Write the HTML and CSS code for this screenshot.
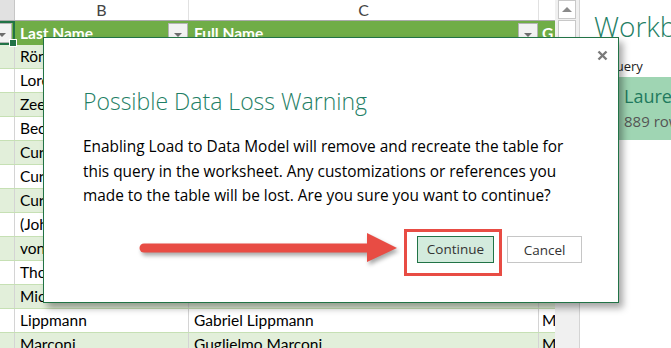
FILE: index.html
```html
<!DOCTYPE html>
<html lang="en">
<head>
  <meta charset="UTF-8" />
  <title>Possible Data Loss Warning</title>
  <link rel="stylesheet" href="styles.css">
</head>
<body>
  <div class="screen">
    <div class="sheet">
      <div class="col-heads">
        <div class="ch ch-a"></div>
        <div class="ch">B</div>
        <div class="ch">C</div>
        <div class="ch ch-d"></div>
      </div>

      <div class="row head">
        <div class="cell a selected"><span class="filter"></span></div>
        <div class="cell b">Last Name<span class="filter"></span></div>
        <div class="cell c">Full Name<span class="filter"></span></div>
        <div class="cell d">G</div>
      </div>
      <div class="row band"><div class="cell a"></div><div class="cell b">Röntgen</div><div class="cell c">Wilhelm Conrad Röntgen</div><div class="cell d">Male</div></div>
      <div class="row"><div class="cell a"></div><div class="cell b">Lorentz</div><div class="cell c">Hendrik Antoon Lorentz</div><div class="cell d">Male</div></div>
      <div class="row band"><div class="cell a"></div><div class="cell b">Zeeman</div><div class="cell c">Pieter Zeeman</div><div class="cell d">Male</div></div>
      <div class="row"><div class="cell a"></div><div class="cell b">Becquerel</div><div class="cell c">Antoine Henri Becquerel</div><div class="cell d">Male</div></div>
      <div class="row band"><div class="cell a"></div><div class="cell b">Curie</div><div class="cell c">Pierre Curie</div><div class="cell d">Male</div></div>
      <div class="row"><div class="cell a"></div><div class="cell b">Curie</div><div class="cell c">Marie Curie</div><div class="cell d">Female</div></div>
      <div class="row band"><div class="cell a"></div><div class="cell b">Curie</div><div class="cell c">Marie Curie</div><div class="cell d">Female</div></div>
      <div class="row"><div class="cell a"></div><div class="cell b">(John William Strutt)</div><div class="cell c">Lord Rayleigh</div><div class="cell d">Male</div></div>
      <div class="row band"><div class="cell a"></div><div class="cell b">von Lenard</div><div class="cell c">Philipp Eduard Anton von Lenard</div><div class="cell d">Male</div></div>
      <div class="row"><div class="cell a"></div><div class="cell b">Thomson</div><div class="cell c">Joseph John Thomson</div><div class="cell d">Male</div></div>
      <div class="row band"><div class="cell a"></div><div class="cell b">Michelson</div><div class="cell c">Albert Abraham Michelson</div><div class="cell d">Male</div></div>
      <div class="row"><div class="cell a"></div><div class="cell b">Lippmann</div><div class="cell c">Gabriel Lippmann</div><div class="cell d">Male</div></div>
      <div class="row band"><div class="cell a"></div><div class="cell b">Marconi</div><div class="cell c">Guglielmo Marconi</div><div class="cell d">Male</div></div>
    </div>

    <div class="scrollbar">
      <div class="sb-btn"><span class="sb-up"></span></div>
      <div class="sb-thumb"></div>
    </div>

    <div class="pane">
      <div class="pane-title">Workbook Queries</div>
      <div class="pane-count">1 query</div>
      <div class="query-card">
        <div class="query-name">Laureates</div>
        <div class="query-rows">889 rows loaded.</div>
      </div>
    </div>

    <div class="dialog">
      <div class="dialog-top">
        <svg class="close" width="11" height="11" viewBox="0 0 11 11">
          <path d="M1.5 1.5 L9.5 9.5 M9.5 1.5 L1.5 9.5" stroke="#7a7a7a" stroke-width="2.4" />
        </svg>
      </div>
      <h1 class="dialog-title">Possible Data Loss Warning</h1>
      <p class="dialog-text">Enabling Load to Data Model will remove and recreate the table for this query in the worksheet. Any customizations or references you made to the table will be lost. Are you sure you want to continue?</p>
      <div class="dialog-buttons">
        <svg class="arrow" width="262" height="36" viewBox="0 0 262 36">
          <path d="M5 18 L232 18" stroke="#e84c44" stroke-width="9" stroke-linecap="round" />
          <polygon points="228,3 258,18 228,32" fill="#e84c44" />
        </svg>
        <span class="highlight"><button class="btn btn-primary">Continue</button></span>
        <button class="btn">Cancel</button>
      </div>
    </div>
  </div>
</body>
</html>
```

FILE: styles.css
```css
* {
  margin: 0;
  padding: 0;
  box-sizing: border-box;
}

body {
  background: #fff;
  overflow: hidden;
  font-family: 'Lato', 'Liberation Sans', sans-serif;
}

.screen {
  position: relative;
  display: flex;
  width: 671px;
  height: 348px;
  overflow: hidden;
}

/* worksheet */

.sheet {
  width: 555px;
  flex-shrink: 0;
}

.col-heads,
.row {
  display: grid;
  grid-template-columns: 15px 174px 350px 16px;
}

.col-heads {
  height: 21px;
  border-bottom: 1px solid #ababab;
}

.ch {
  border-right: 1px solid #e1e1e1;
  text-align: center;
  font-size: 16px;
  line-height: 20px;
  color: #444;
}

.ch-a {
  background: #e1e1e1;
  border-right-color: #c6c6c6;
}

.ch-d {
  border-right: none;
}

.row {
  height: 24px;
  border-bottom: 1px solid #c6e0b4;
}

.row.band {
  background: #e2efda;
}

.cell {
  border-right: 1px solid #d4d4d4;
  padding-left: 5px;
  font-size: 15.5px;
  line-height: 23px;
  color: #000;
  white-space: nowrap;
  overflow: hidden;
}

.cell.a {
  padding-left: 0;
}

.cell.d {
  border-right: none;
  padding-left: 3px;
}

.row.head {
  background: #70ad47;
  border-bottom: none;
}

.head .cell {
  display: flex;
  justify-content: space-between;
  align-items: center;
  border-right-color: #70ad47;
  color: #fff;
  font-weight: bold;
}

.head .cell.a {
  justify-content: flex-end;
  padding-right: 1px;
}

.cell.selected {
  position: relative;
  overflow: visible;
  border: 2px solid #217346;
  border-left: none;
}

.cell.selected::after {
  content: "";
  position: absolute;
  right: -4px;
  bottom: -4px;
  width: 6px;
  height: 6px;
  background: #217346;
  border: 1px solid #fff;
}

.filter {
  position: relative;
  width: 20px;
  height: 20px;
  flex-shrink: 0;
  background: #f2f2f2;
  border: 1px solid #b4b4b4;
}

.filter::after {
  content: "";
  position: absolute;
  left: 5px;
  top: 9px;
  border-left: 4px solid transparent;
  border-right: 4px solid transparent;
  border-top: 4px solid #6d6d6d;
}

/* scrollbar */

.scrollbar {
  width: 25px;
  flex-shrink: 0;
  background: #f0f0f0;
  border-right: 1px solid #d4d4d4;
  padding: 0 3px 0 3px;
}

.sb-btn {
  height: 19px;
  background: #fff;
  border: 1px solid #c8c8c8;
  display: flex;
  justify-content: center;
  align-items: center;
}

.sb-up {
  border-left: 5px solid transparent;
  border-right: 5px solid transparent;
  border-bottom: 5px solid #8a8a8a;
}

.sb-thumb {
  height: 270px;
  margin-top: 1px;
  background: #fff;
  border: 1px solid #c8c8c8;
}

/* queries pane */

.pane {
  flex: 1;
  padding-top: 9px;
  overflow: hidden;
  white-space: nowrap;
}

.pane-title {
  padding-left: 14px;
  font-family: 'Open Sans', sans-serif;
  font-weight: 300;
  font-size: 28px;
  line-height: 34px;
  color: #1f7f66;
}

.pane-count {
  padding-left: 17px;
  margin-top: 14px;
  font-family: 'Open Sans', sans-serif;
  font-size: 13px;
  line-height: 18px;
  color: #222;
}

.query-card {
  margin-top: 2px;
  height: 63px;
  padding: 7px 0 0 44px;
  background: #9fd5b3;
  font-family: 'Open Sans', sans-serif;
}

.query-name {
  font-size: 18px;
  line-height: 24px;
  color: #1f7a5e;
}

.query-rows {
  margin-top: 3px;
  font-size: 15px;
  line-height: 20px;
  color: #555;
}

/* dialog */

.dialog {
  position: absolute;
  left: 43px;
  top: 37px;
  width: 576px;
  height: 266px;
  background: #fff;
  border: 1px solid #217346;
  box-shadow: 4px 5px 7px rgba(0, 0, 0, 0.35);
  padding: 0 36px 0 39px;
  font-family: 'Open Sans', sans-serif;
}

.dialog-top {
  display: flex;
  justify-content: flex-end;
  height: 47px;
  padding-top: 12px;
  margin-right: -26px;
}

.dialog-title {
  font-weight: 300;
  font-size: 23px;
  line-height: 32px;
  color: #1f7f66;
}

.dialog-text {
  margin-top: 18px;
  font-size: 15.4px;
  line-height: 24.5px;
  color: #000;
}

.dialog-buttons {
  display: flex;
  justify-content: flex-end;
  align-items: center;
  margin-top: 20px;
}

.arrow {
  margin-right: 3px;
  margin-bottom: 8px;
  filter: drop-shadow(2px 3px 2px rgba(0, 0, 0, 0.35));
}

.highlight {
  display: block;
  border: 3px solid #e84c44;
  padding: 4px 5px 10px 10px;
}

.btn {
  display: block;
  width: 75px;
  height: 27px;
  background: #fff;
  border: 1px solid #c6c6c6;
  font-family: 'Open Sans', sans-serif;
  font-size: 13.5px;
  color: #333;
}

.btn-primary {
  width: 77px;
  background: #d3ebdd;
  border-color: #217346;
}

.dialog-buttons > .btn {
  margin-left: 5px;
  margin-bottom: 5px;
}
```
